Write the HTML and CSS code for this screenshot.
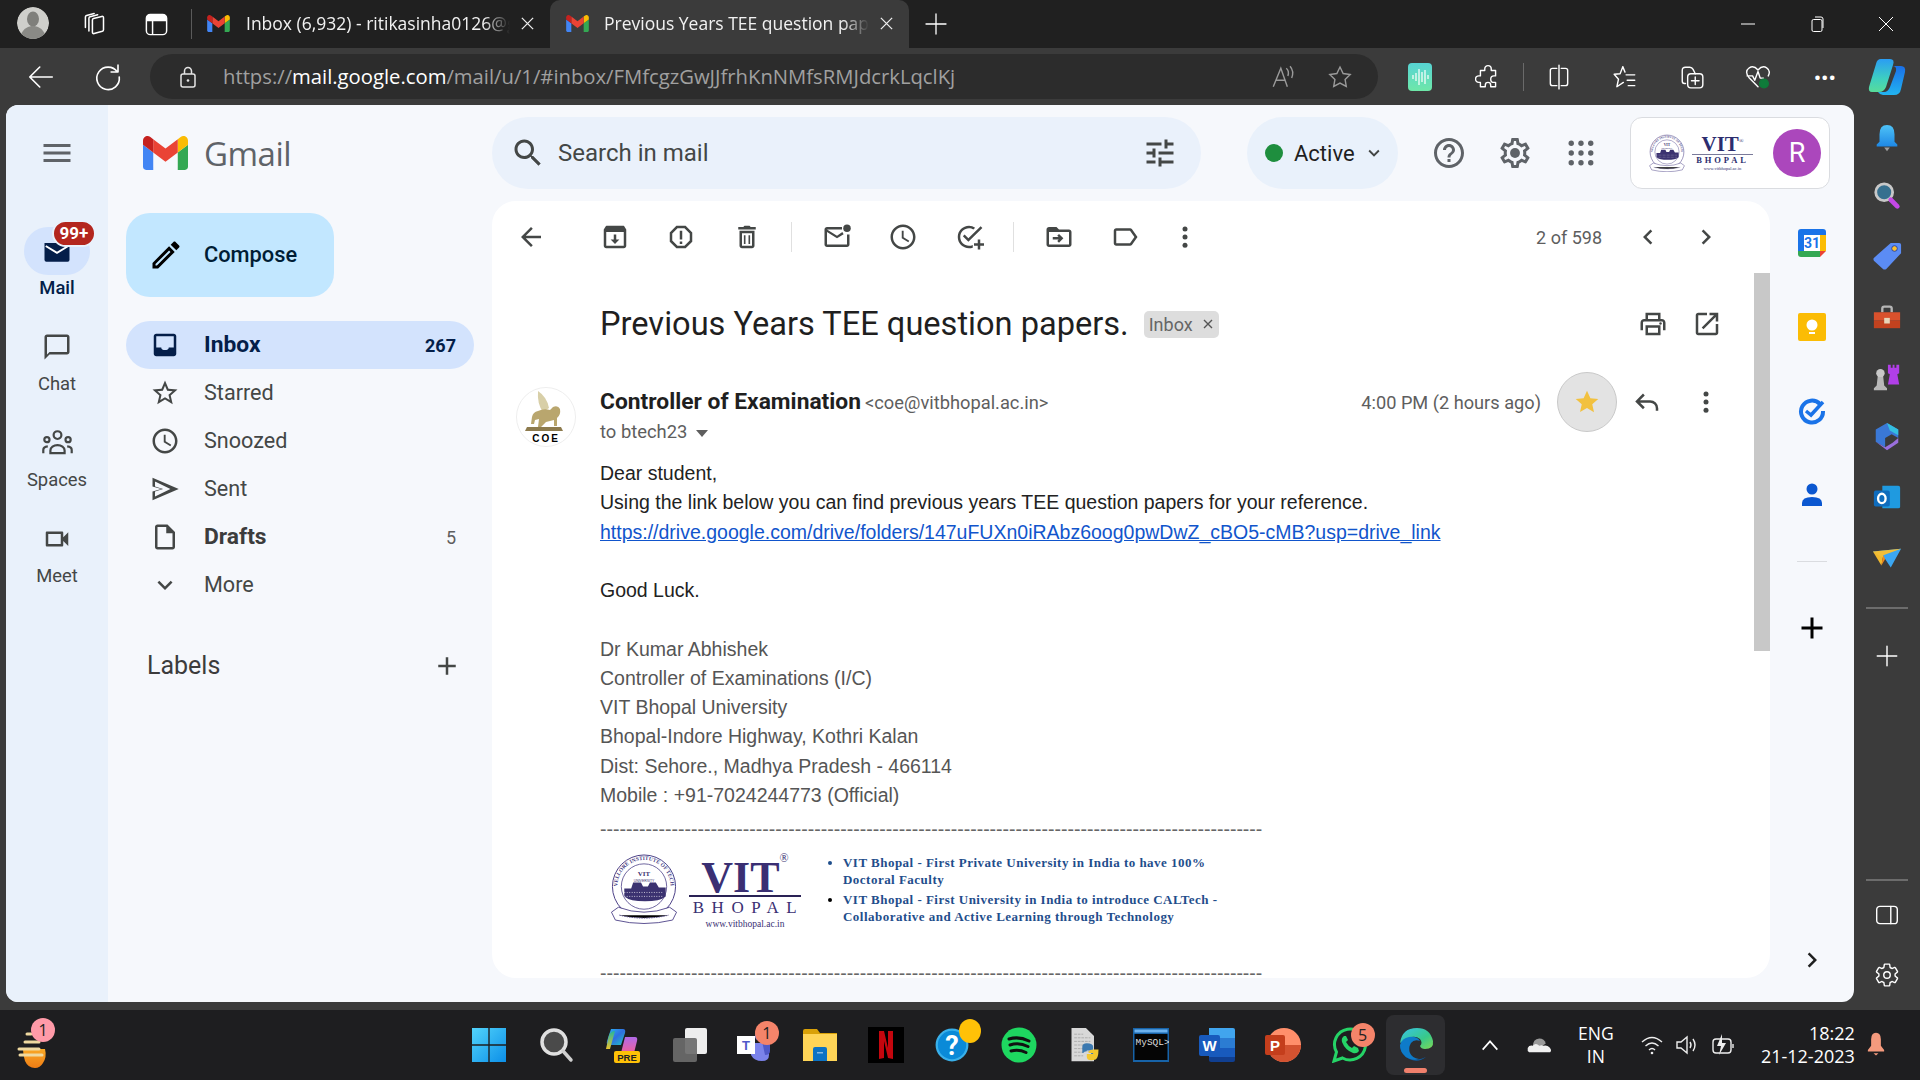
FILE: index.html
```html
<!DOCTYPE html>
<html lang="en">
<head>
<meta charset="utf-8">
<title>Previous Years TEE question papers.</title>
<link rel="stylesheet" href="styles.css">
</head>
<body>
<svg class="defs" width="0" height="0" aria-hidden="true">
  <defs>
    <linearGradient id="gWin" x1="0" y1="0" x2="1" y2="1"><stop offset="0" stop-color="#52d4fb"/><stop offset="1" stop-color="#0c8fe8"/></linearGradient>
    <linearGradient id="gCop" x1="0" y1="0" x2="1" y2="1"><stop offset="0" stop-color="#2bb6f3"/><stop offset=".5" stop-color="#2f6fe0"/><stop offset="1" stop-color="#1fc7c0"/></linearGradient>
    <linearGradient id="gCopR" x1="0" y1="0" x2="0" y2="1"><stop offset="0" stop-color="#1a6fe8"/><stop offset="1" stop-color="#22b4f0"/></linearGradient>
    <linearGradient id="gCopL" x1="0" y1="0" x2="0" y2="1"><stop offset="0" stop-color="#2a9df4"/><stop offset=".6" stop-color="#3ecfc0"/><stop offset="1" stop-color="#58dc9a"/></linearGradient>
    <linearGradient id="gPre" x1="0" y1="0" x2="0" y2="1"><stop offset="0" stop-color="#b06ae8"/><stop offset="1" stop-color="#f0609a"/></linearGradient>
    <linearGradient id="gPreL" x1="0" y1="0" x2="0" y2="1"><stop offset="0" stop-color="#25b59b"/><stop offset="1" stop-color="#e8c330"/></linearGradient>
    <linearGradient id="gEdge" x1="0" y1="0" x2="1" y2="1"><stop offset="0" stop-color="#38c3e8"/><stop offset=".6" stop-color="#38c98a"/><stop offset="1" stop-color="#7ed957"/></linearGradient>
    <linearGradient id="gSun" x1="0" y1="0" x2="0" y2="1"><stop offset="0" stop-color="#f9a825"/><stop offset="1" stop-color="#ef7d15"/></linearGradient>
    <linearGradient id="gBell" x1="0" y1="0" x2="0" y2="1"><stop offset="0" stop-color="#4fc3f7"/><stop offset="1" stop-color="#1e88e5"/></linearGradient>
    <linearGradient id="gWave" x1="0" y1="0" x2="0" y2="1"><stop offset="0" stop-color="#57d4d4"/><stop offset="1" stop-color="#6ee7a8"/></linearGradient>
    <symbol id="gm" viewBox="52 42 88 66">
      <path fill="#4285F4" d="M58 108h14V74L52 59v43c0 3.32 2.69 6 6 6"/>
      <path fill="#34A853" d="M120 108h14c3.32 0 6-2.69 6-6V59l-20 15"/>
      <path fill="#FBBC04" d="M120 48v26l20-15v-8c0-7.42-8.47-11.65-14.4-7.2"/>
      <path fill="#EA4335" d="M72 74V48l24 18 24-18v26L96 92"/>
      <path fill="#C5221F" d="M52 51v8l20 15V48l-5.6-4.2c-5.94-4.45-14.4-.22-14.4 7.2"/>
    </symbol>
    <symbol id="more" viewBox="0 0 24 24"><circle cx="12" cy="5.5" r="2"/><circle cx="12" cy="12" r="2"/><circle cx="12" cy="18.5" r="2"/></symbol>
    <symbol id="seal" viewBox="0 0 68 72">
      <path id="sealArc" d="M7 34a27 27 0 0 1 54 0" fill="none"/>
      <circle cx="34" cy="34" r="32" fill="#fff" stroke="#4a3f86" stroke-width="1"/>
      <circle cx="34" cy="34" r="23" fill="#fff" stroke="#4a3f86" stroke-width=".8"/>
      <text class="seal-ring"><textPath href="#sealArc">VELLORE INSTITUTE OF TECHNOLOGY</textPath></text>
      <text class="seal-v" x="34" y="23" text-anchor="middle">VIT</text>
      <text class="seal-u" x="34" y="29" text-anchor="middle">UNIVERSITY</text>
      <path fill="#3b3270" d="M14 44V36h7l2-6h8l2 4h5l2-4h6l3 5h7v9q-6 5-21 5t-21-5z"/>
      <path fill="none" stroke="#fff" stroke-width=".7" stroke-dasharray="1 1.5" d="M14 40h40M14 44h40"/>
      <path fill="#fff" stroke="#4a3f86" stroke-width=".9" d="M1 60l7-5q26 10 52 0l7 5-4 8q-29 7-58 0z"/>
      <path stroke="#4a3f86" stroke-width="1" stroke-dasharray="1.5 1" d="M9 63q25 6 50 0"/>
    </symbol>
  </defs>
</svg>

<div class="screen">
  <header class="titlebar">
    <div class="profile-pic"><svg viewBox="0 0 32 32"><circle cx="16" cy="16" r="16" fill="#cfcfcb"/><ellipse cx="16" cy="12" rx="6" ry="7.5" fill="#7f7f7b"/><path d="M4 28c2-7 8-9 12-9s10 2 12 9q-5 4-12 4T4 28z" fill="#8a8a86"/></svg></div>
    <div class="tb-btn tb-first"><svg class="i-chrome i-coll" viewBox="0 0 24 24"><path d="M11.500 8.500Q11.500 7.500 12.500 7.200L19.500 5.500Q21 5.200 21 6.700V17Q21 18 20 18.300L13 20.200Q11.500 20.500 11.500 19Z"/><path d="M8.500 18V7Q8.500 6 9.500 5.700L16 4"/><path d="M5.500 15V6Q5.500 5 6.500 4.700L13 3"/></svg></div>
    <div class="tb-btn tb-second"><svg class="i-chrome i-vtabs" viewBox="0 0 24 24"><rect x="3" y="3" width="18" height="18" rx="3.500"/><path class="solid" d="M3.500 7Q3.500 3.500 7 3.500h10Q20.500 3.500 20.500 7v1.500h-17z"/><path d="M8.500 8.500V20.500"/></svg></div>
    <div class="tab-sep"></div>
    <div class="tab">
      <svg class="favicon"><use href="#gm"/></svg>
      <span class="tab-title">Inbox (6,932) - ritikasinha0126@gmail.com</span>
      <svg class="tab-x" viewBox="0 0 16 16"><path d="M2 2l12 12M14 2L2 14"/></svg>
    </div>
    <div class="tab tab-active">
      <svg class="favicon"><use href="#gm"/></svg>
      <span class="tab-title">Previous Years TEE question papers.</span>
      <svg class="tab-x" viewBox="0 0 16 16"><path d="M2 2l12 12M14 2L2 14"/></svg>
    </div>
    <div class="tb-btn"><svg class="i-chrome" viewBox="0 0 24 24"><path d="M12 2v20M2 12h20"/></svg></div>
    <div class="win-btns">
      <div class="win-btn"><svg viewBox="0 0 16 16"><path d="M1 8h14"/></svg></div>
      <div class="win-btn"><svg viewBox="0 0 16 16"><rect x="3" y="3.5" width="10" height="12" rx="1.5"/><path d="M6 1h6q2 0 2 2v9"/></svg></div>
      <div class="win-btn"><svg viewBox="0 0 16 16"><path d="M1 1l14 14M15 1L1 15"/></svg></div>
    </div>
  </header>

  <div class="toolbar">
    <div class="tool-back"><svg class="i-chrome i-lg" viewBox="0 0 24 24"><path d="M21 12H3M11 4l-8 8 8 8"/></svg></div>
    <div class="tool-reload"><svg class="i-chrome i-lg" viewBox="0 0 24 24"><path d="M19.5 8A9 9 0 1 0 21 12M20 2.5V8h-5.5"/></svg></div>
    <div class="address">
      <svg class="i-lock" viewBox="0 0 24 24"><rect x="5" y="9" width="14" height="13" rx="2"/><path d="M8.5 9V6a3.500 3.500 0 0 1 7 0v3"/><circle class="solid" cx="12" cy="15.500" r="1.300"/></svg>
      <span class="url"><span class="url-dim">https://</span><span class="url-host">mail.google.com</span><span class="url-dim">/mail/u/1/#inbox/FMfcgzGwJJfrhKnNMfsRMJdcrkLqclKj</span></span>
      <svg class="i-addr i-read" viewBox="0 0 24 24"><path d="M3 21L10 4l6 17M5.500 15h9M15 4q3 2.500 1.500 7M18.500 2q4 4.500 1.500 11"/></svg>
      <svg class="i-addr i-fav" viewBox="0 0 24 24"><path d="M12 2.800l2.900 6 6.500.9-4.700 4.500 1.100 6.500-5.800-3.100-5.800 3.100 1.100-6.500-4.700-4.500 6.500-.9z"/></svg>
    </div>
    <div class="ext ext-wave"><svg viewBox="0 0 24 28"><rect width="24" height="28" rx="4" fill="url(#gWave)"/><path d="M5 12v4M8 10v8M11 6v16M14 9v10M17 7v14M20 12v4" stroke="#fff" stroke-width="1.200"/></svg></div>
    <div class="ext ext-puzzle"><svg class="i-chrome i-md" viewBox="0 0 24 24"><path d="M9 4.500a3 3 0 0 1 6 0V6h4v5h-1.500a3 3 0 0 0 0 6H19v4h-4.500v-1.500a2.500 2.500 0 0 0-5 0V21H5v-4H3.500a3 3 0 0 1 0-6H5V6h4z"/></svg></div>
    <div class="tool-sep"></div>
    <div class="ext"><svg class="i-chrome i-md" viewBox="0 0 24 24"><path d="M10 4H6q-2 0-2 2v12q0 2 2 2h4M14 4h4q2 0 2 2v12q0 2-2 2h-4M12 1v22"/></svg></div>
    <div class="ext"><svg class="i-chrome i-md" viewBox="0 0 24 24"><path d="M13 10h8M14 15h7M15 20h6M10 2.500L7.500 9 2 9.500l4 4.500-1.500 7 6-4M10 2.500l2 5"/></svg></div>
    <div class="ext"><svg class="i-chrome i-md" viewBox="0 0 24 24"><path d="M6 18H5q-2 0-2-2V6q0-3 3-3h4q2 0 3 2l2 4"/><rect x="8" y="9" width="14" height="13" rx="3"/><path d="M15 12v7M11.500 15.500h7"/></svg></div>
    <div class="ext ext-health"><svg class="i-chrome i-md" viewBox="0 0 24 24"><path d="M12 21L4 13q-5-6 0-9.500 4-2.500 8 2 4-4.500 8-2 4 2.500 1.500 7.500M2 11h5l2 4 3-8 2 6h3"/><circle class="green" cx="17.500" cy="18" r="4"/></svg></div>
    <div class="ext ext-dots">···</div>
    <div class="ext ext-cop"><svg viewBox="0 0 38 38"><path fill="url(#gCopL)" d="M13 1h9q5 0 3 6l-7 22q-2 5-7 5H4Q0 34 1 29L8 6q1-5 5-5z"/><path fill="url(#gCopR)" d="M24 8h9q5 0 4 6l-4 17q-1 6-7 6H15q-3 0-5-3h6q4 0 6-5l6-16q1-5-4-5z"/></svg></div>
  </div>

  <div class="app">
    <main class="gmail">
      <nav class="rail">
        <div class="rail-menu"><svg class="ic ic-m" viewBox="0 0 24 24"><path d="M3 18h18v-2H3v2zm0-5h18v-2H3v2zm0-7v2h18V6H3z"/></svg></div>
        <div class="rail-item rail-active">
          <div class="rail-pill">
            <svg class="ic ic-navy" viewBox="0 0 24 24"><path d="M2 5.500h20V19q0 1.500-1.500 1.500h-17Q2 20.500 2 19z"/><path class="env-v" d="M3 8l9 5.500L21 8"/></svg>
            <span class="badge">99+</span>
          </div>
          <span class="rail-label">Mail</span>
        </div>
        <div class="rail-item">
          <div class="rail-pill"><svg class="ic ic-g" viewBox="0 0 24 24"><path d="M20 2H4c-1.100 0-2 .9-2 2v18l4-4h14c1.100 0 2-.9 2-2V4c0-1.100-.9-2-2-2zm0 14H6l-2 2V4h16v12z"/></svg></div>
          <span class="rail-label">Chat</span>
        </div>
        <div class="rail-item">
          <div class="rail-pill"><svg class="ic ic-spaces" viewBox="0 0 24 24"><circle cx="12" cy="5.500" r="3"/><circle cx="3.800" cy="9" r="2"/><circle cx="20.200" cy="9" r="2"/><path d="M6.500 19.500v-2c0-2.500 2.500-4.200 5.500-4.200s5.500 1.700 5.500 4.200v2z"/><path d="M1 19.500v-2.500q0-2.500 3.500-2.800M23 19.500v-2.500q0-2.500-3.500-2.800"/></svg></div>
          <span class="rail-label">Spaces</span>
        </div>
        <div class="rail-item">
          <div class="rail-pill"><svg class="ic ic-g" viewBox="0 0 24 24"><path d="M15 8v8H5V8h10m1-2H4c-.55 0-1 .45-1 1v10c0 .55.45 1 1 1h12c.55 0 1-.45 1-1v-3.500l4 4v-11l-4 4V7c0-.55-.45-1-1-1z"/></svg></div>
          <span class="rail-label">Meet</span>
        </div>
      </nav>

      <div class="brand">
        <svg class="brand-m"><use href="#gm"/></svg>
        <span class="brand-name">Gmail</span>
      </div>

      <aside class="sidenav">
        <button class="compose" type="button">
          <svg class="ic-36" viewBox="0 0 24 24"><path d="M3 17.250V21h3.750L17.810 9.940l-3.750-3.750L3 17.250zM5.920 19H5v-.92l9.060-9.060.92.92L5.920 19zM20.710 7.040c.39-.39.39-1.020 0-1.410l-2.340-2.340c-.2-.2-.45-.29-.71-.29s-.51.1-.7.29l-1.830 1.830 3.750 3.750 1.830-1.830z"/></svg>
          <span class="compose-text">Compose</span>
        </button>
        <ul class="nav-list">
          <li class="nav-row nav-active">
            <svg class="ic ic-navy" viewBox="0 0 24 24"><path d="M19 3H5c-1.100 0-2 .9-2 2v14c0 1.100.9 2 2 2h14c1.100 0 2-.9 2-2V5c0-1.100-.9-2-2-2zm0 11h-4c0 1.660-1.340 2-3 2s-3-.34-3-2H5V5h14v9z"/></svg>
            <span class="nav-text">Inbox</span><span class="nav-count">267</span>
          </li>
          <li class="nav-row">
            <svg class="ic ic-d" viewBox="0 0 24 24"><path d="M22 9.240l-7.190-.62L12 2 9.190 8.630 2 9.240l5.460 4.730L5.820 21 12 17.270 18.180 21l-1.630-7.030L22 9.240zM12 15.400l-3.760 2.270 1-4.280-3.320-2.880 4.380-.38L12 6.100l1.710 4.040 4.380.38-3.320 2.880 1 4.280L12 15.400z"/></svg>
            <span class="nav-text">Starred</span>
          </li>
          <li class="nav-row">
            <svg class="ic ic-d" viewBox="0 0 24 24"><path d="M11.990 2C6.470 2 2 6.480 2 12s4.470 10 9.990 10C17.520 22 22 17.520 22 12S17.520 2 11.990 2zM12 20c-4.420 0-8-3.580-8-8s3.580-8 8-8 8 3.580 8 8-3.580 8-8 8zm.5-13H11v6l5.250 3.150.75-1.230-4.500-2.670z"/></svg>
            <span class="nav-text">Snoozed</span>
          </li>
          <li class="nav-row">
            <svg class="ic ic-d" viewBox="0 0 24 24"><path d="M4.010 6.030l12.300 5.970-12.310 5.970.01-3.970 6.500-2-6.500-2 .01-3.970M2.010 3L2 10l7 2-7 2 .01 7L23 12 2.010 3z"/></svg>
            <span class="nav-text">Sent</span>
          </li>
          <li class="nav-row nav-bold">
            <svg class="ic ic-d" viewBox="0 0 24 24"><path d="M14 2H6c-1.100 0-1.990.9-1.990 2L4 20c0 1.100.89 2 1.990 2H18c1.100 0 2-.9 2-2V8l-6-6zM6 20V4h7v5h5v11H6z"/></svg>
            <span class="nav-text">Drafts</span><span class="nav-count nav-count-light">5</span>
          </li>
          <li class="nav-row">
            <svg class="ic ic-d" viewBox="0 0 24 24"><path d="M16.590 8.590L12 13.170 7.410 8.590 6 10l6 6 6-6z"/></svg>
            <span class="nav-text">More</span>
          </li>
        </ul>
        <div class="labels">
          <span class="labels-text">Labels</span>
          <svg class="ic ic-g" viewBox="0 0 24 24"><path d="M19 13h-6v6h-2v-6H5v-2h6V5h2v6h6v2z"/></svg>
        </div>
      </aside>

      <div class="topbar">
        <div class="search">
          <svg class="ic-36 ic-d" viewBox="0 0 24 24"><path d="M15.500 14h-.79l-.28-.27C15.410 12.590 16 11.110 16 9.500 16 5.910 13.090 3 9.500 3S3 5.910 3 9.500 5.910 16 9.500 16c1.610 0 3.090-.59 4.230-1.570l.27.28v.79l5 4.990L20.490 19l-4.990-5zm-6 0C7.010 14 5 11.990 5 9.500S7.010 5 9.500 5 14 7.010 14 9.500 11.990 14 9.500 14z"/></svg>
          <span class="search-text">Search in mail</span>
          <svg class="ic-36 ic-d search-tune" viewBox="0 0 24 24"><path d="M3 17v2h6v-2H3zM3 5v2h10V5H3zm10 16v-2h8v-2h-8v-2h-2v6h2zM7 9v2H3v2h4v2h2V9H7zm14 4v-2H11v2h10zm-6-4h2V7h4V5h-4V3h-2v6z"/></svg>
        </div>
        <div class="status">
          <span class="status-dot"></span>
          <span class="status-text">Active</span>
          <svg class="status-arrow" viewBox="0 0 24 24"><path d="M16.590 8.590L12 13.170 7.410 8.590 6 10l6 6 6-6z"/></svg>
        </div>
        <div class="top-btns">
          <div class="top-btn"><svg class="ic-36 ic-m" viewBox="0 0 24 24"><path d="M11 18h2v-2h-2v2zm1-16C6.480 2 2 6.480 2 12s4.480 10 10 10 10-4.480 10-10S17.520 2 12 2zm0 18c-4.410 0-8-3.590-8-8s3.590-8 8-8 8 3.590 8 8-3.590 8-8 8zm0-14c-2.210 0-4 1.790-4 4h2c0-1.100.9-2 2-2s2 .9 2 2c0 2-3 1.750-3 5h2c0-2.250 3-2.500 3-5 0-2.210-1.790-4-4-4z"/></svg></div>
          <div class="top-btn"><svg class="ic-36 ic-m" viewBox="0 0 24 24"><path d="M19.430 12.980c.04-.32.07-.64.07-.98 0-.34-.03-.66-.07-.98l2.110-1.650c.19-.15.24-.42.12-.64l-2-3.460c-.09-.16-.26-.25-.44-.25-.06 0-.12.01-.17.03l-2.490 1c-.52-.4-1.080-.73-1.690-.98l-.38-2.650C14.460 2.180 14.250 2 14 2h-4c-.25 0-.46.18-.49.42l-.38 2.650c-.61.25-1.170.59-1.690.98l-2.490-1c-.06-.02-.12-.03-.18-.03-.17 0-.34.09-.43.25l-2 3.460c-.13.22-.07.49.12.64l2.110 1.650c-.04.32-.07.65-.07.98 0 .33.03.66.07.98l-2.110 1.650c-.19.15-.24.42-.12.64l2 3.460c.09.16.26.25.44.25.06 0 .12-.01.17-.03l2.490-1c.52.4 1.080.73 1.690.98l.38 2.650c.03.24.24.42.49.42h4c.25 0 .46-.18.49-.42l.38-2.650c.61-.25 1.170-.59 1.690-.98l2.490 1c.06.02.12.03.18.03.17 0 .34-.09.43-.25l2-3.460c.12-.22.07-.49-.12-.64l-2.110-1.650zm-1.980-1.710c.04.31.05.52.05.73 0 .21-.02.43-.05.73l-.14 1.130.89.7 1.080.84-.7 1.210-1.270-.51-1.040-.42-.9.68c-.43.32-.84.56-1.250.73l-1.060.43-.16 1.130-.2 1.350h-1.400l-.19-1.350-.16-1.130-1.060-.43c-.43-.18-.83-.41-1.230-.71l-.91-.7-1.060.43-1.270.51-.7-1.210 1.080-.84.89-.7-.14-1.130c-.03-.31-.05-.54-.05-.74s.02-.43.05-.73l.14-1.130-.89-.7-1.080-.84.7-1.210 1.270.51 1.040.42.9-.68c.43-.32.84-.56 1.250-.73l1.060-.43.16-1.130.2-1.350h1.390l.19 1.350.16 1.130 1.060.43c.43.18.83.41 1.230.71l.91.7 1.060-.43 1.270-.51.7 1.210-1.070.85-.89.7.14 1.130z"/><circle cx="12" cy="12" r="3.300"/></svg></div>
          <div class="top-btn"><svg class="ic-36 ic-m" viewBox="0 0 24 24"><circle cx="5.500" cy="5.500" r="1.800"/><circle cx="12" cy="5.500" r="1.800"/><circle cx="18.500" cy="5.500" r="1.800"/><circle cx="5.500" cy="12" r="1.800"/><circle cx="12" cy="12" r="1.800"/><circle cx="18.500" cy="12" r="1.800"/><circle cx="5.500" cy="18.500" r="1.800"/><circle cx="12" cy="18.500" r="1.800"/><circle cx="18.500" cy="18.500" r="1.800"/></svg></div>
        </div>
        <div class="account">
          <svg class="account-seal"><use href="#seal"/></svg>
          <div class="account-vit">
            <span class="account-name">VIT<sup>®</sup></span>
            <span class="account-place">BHOPAL</span>
            <span class="account-web">www.vitbhopal.ac.in</span>
          </div>
          <span class="avatar-r">R</span>
        </div>
      </div>

      <section class="card">
        <div class="actions">
          <div class="act act-back"><svg class="ic ic-g" viewBox="0 0 24 24"><path d="M20 11H7.830l5.590-5.590L12 4l-8 8 8 8 1.410-1.410L7.830 13H20v-2z"/></svg></div>
          <div class="act act-first"><svg class="ic ic-g" viewBox="0 0 24 24"><path d="M19.500 3.500L21 6v13c0 1.100-.9 2-2 2H5c-1.100 0-2-.9-2-2V6l1.500-2.500C5 3 5.300 3 6 3h12c.7 0 1.200 0 1.500.5zM5 8v11h14V8H5zm6 2h2v4h2.500L12 17.500 8.500 14H11v-4z"/></svg></div>
          <div class="act"><svg class="ic ic-g" viewBox="0 0 24 24"><path d="M8.300 3h7.400L21 8.300v7.400L15.700 21H8.300L3 15.700V8.300L8.300 3zm.9 2L5 9.200v5.600L9.200 19h5.600l4.200-4.200V9.200L14.800 5H9.200zM11 7h2v7h-2V7zm0 8.500h2v2h-2v-2z"/></svg></div>
          <div class="act"><svg class="ic ic-g" viewBox="0 0 24 24"><path d="M15 4l-1-1h-4L9 4H5v2h14V4zM6 7v12c0 1.100.9 2 2 2h8c1.100 0 2-.9 2-2V7H6zm2 2h8v10H8V9zm1.500 1.500h1.300v7H9.500v-7zm3.700 0h1.300v7h-1.300v-7z"/></svg></div>
          <div class="act-sep"></div>
          <div class="act"><svg class="ic ic-g" viewBox="0 0 24 24"><path d="M16 4H4c-1.100 0-2 .9-2 2v12c0 1.100.9 2 2 2h16c1.100 0 2-.9 2-2v-8h-2v8H4V8l8 5 5.300-3.300-1-1.700L12 11 4 6h12V4z"/><circle cx="20" cy="5" r="3"/></svg></div>
          <div class="act"><svg class="ic ic-g" viewBox="0 0 24 24"><path d="M11.990 2C6.470 2 2 6.480 2 12s4.470 10 9.990 10C17.520 22 22 17.520 22 12S17.520 2 11.990 2zM12 20c-4.420 0-8-3.580-8-8s3.580-8 8-8 8 3.580 8 8-3.580 8-8 8zm.5-13H11v6l5.250 3.150.75-1.230-4.500-2.670z"/></svg></div>
          <div class="act"><svg class="ic ic-g" viewBox="0 0 24 24"><path d="M12 3c-5 0-9 4-9 9s4 9 9 9c1.100 0 2.100-.2 3-.5v-2.200c-.9.400-1.900.7-3 .7-3.900 0-7-3.100-7-7s3.100-7 7-7c1.300 0 2.500.3 3.500 1l1.400-1.400C15.500 3.600 13.800 3 12 3zm9.300.3L11.500 13l-3-3-1.400 1.400 4.400 4.400L22.700 4.700l-1.400-1.400zM19 14v3h-3v2h3v3h2v-3h3v-2h-3v-3h-2z"/></svg></div>
          <div class="act-sep"></div>
          <div class="act"><svg class="ic ic-g" viewBox="0 0 24 24"><path d="M20 6h-8l-2-2H4c-1.100 0-2 .9-2 2v12c0 1.100.9 2 2 2h16c1.100 0 2-.9 2-2V8c0-1.100-.9-2-2-2zm0 12H4V8h16v10zM12 9.500l-1.400 1.400 1.100 1.100H7v2h4.700l-1.100 1.100L12 16.500l3.500-3.500L12 9.500z"/></svg></div>
          <div class="act"><svg class="ic ic-g" viewBox="0 0 24 24"><path d="M17.630 5.840C17.270 5.330 16.670 5 16 5L5 5.010C3.900 5.010 3 5.900 3 7v10c0 1.100.9 1.990 2 1.990L16 19c.67 0 1.270-.33 1.630-.84L22 12l-4.370-6.160zM16 17H5V7h11l3.550 5L16 17z"/></svg></div>
          <div class="act act-more"><svg class="ic ic-g"><use href="#more"/></svg></div>
          <div class="pager">
            <span class="pager-text">2 of 598</span>
            <div class="pager-btn"><svg class="ic ic-g" viewBox="0 0 24 24"><path d="M15.410 7.410L14 6l-6 6 6 6 1.410-1.410L10.830 12z"/></svg></div>
            <div class="pager-btn"><svg class="ic ic-g" viewBox="0 0 24 24"><path d="M8.590 16.590L10 18l6-6-6-6-1.410 1.410L13.170 12z"/></svg></div>
          </div>
        </div>

        <div class="card-body">
          <article class="thread">
            <div class="subject-row">
              <h1 class="subject">Previous Years TEE question papers.</h1>
              <span class="chip">Inbox<svg class="chip-x" viewBox="0 0 12 12"><path d="M2 2l8 8M10 2l-8 8"/></svg></span>
              <div class="subject-tools">
                <svg class="ic ic-g" viewBox="0 0 24 24"><path d="M19 8h-1V3H6v5H5c-1.660 0-3 1.340-3 3v6h4v4h12v-4h4v-6c0-1.660-1.340-3-3-3zM8 5h8v3H8V5zm8 14H8v-4h8v4zm2-2v-4H6v4H4v-6c0-.55.45-1 1-1h14c.55 0 1 .45 1 1v6h-2z"/><circle cx="18" cy="11.500" r="1"/></svg>
                <svg class="ic ic-g" viewBox="0 0 24 24"><path d="M19 19H5V5h7V3H5c-1.110 0-2 .9-2 2v14c0 1.100.89 2 2 2h14c1.100 0 2-.9 2-2v-7h-2v7zM14 3v2h3.590l-9.830 9.830 1.410 1.410L19 6.410V10h2V3h-7z"/></svg>
              </div>
            </div>
            <div class="message">
              <div class="sender-pic"><svg viewBox="0 0 60 60"><circle cx="30" cy="30" r="29.500" fill="#fff" stroke="#eee"/><path fill="#d8cfa8" d="M22 4q9 6 11 17l-6 4q-6-8-5-21z"/><path fill="#b9a66e" d="M22 24q6-3 12-1l3-3q5-2 7 2 1 6-3 9v8h-3v-6l-8 2-5 5h-3l1-8-4 1-1 4h-3l1-7q1-5 6-6z"/><path fill="#8d7b4e" d="M11 40h34l2 4H9z"/><text class="coe" x="30" y="55" text-anchor="middle">COE</text></svg></div>
              <div class="msg-main">
                <div class="msg-head">
                  <div class="who">
                    <div class="who-from"><span class="from-name">Controller of Examination</span> <span class="from-mail">&lt;coe@vitbhopal.ac.in&gt;</span></div>
                    <div class="who-to">to btech23 <span class="to-arrow"></span></div>
                  </div>
                  <div class="msg-meta">
                    <span class="msg-time">4:00 PM (2 hours ago)</span>
                    <div class="star-btn"><svg viewBox="0 0 24 24"><path fill="#f2c13f" d="M12 3l2.700 6 6.300.6-4.800 4.200 1.400 6.300L12 16.800 6.400 20l1.400-6.300L3 9.600 9.300 9z"/></svg></div>
                    <div class="meta-btn"><svg class="ic ic-reply" viewBox="0 0 24 24"><path d="M9.500 6L4 11.500l5.500 5.500M4 11.500h10.500c3 0 5.500 2.300 5.500 5.500v2"/></svg></div>
                    <div class="meta-btn"><svg class="ic ic-g"><use href="#more"/></svg></div>
                  </div>
                </div>
                <div class="msg-body">
                  <div>Dear student,</div>
                  <div>Using the link below you can find previous years TEE question papers for your reference.</div>
                  <div><a class="link" href="#">https://drive.google.com/drive/folders/147uFUXn0iRAbz6oog0pwDwZ_cBO5-cMB?usp=drive_link</a></div>
                  <div><br></div>
                  <div>Good Luck.</div>
                  <div><br></div>
                  <div class="sig">
                    <div>Dr Kumar Abhishek</div>
                    <div>Controller of Examinations (I/C)</div>
                    <div>VIT Bhopal University</div>
                    <div>Bhopal-Indore Highway, Kothri Kalan</div>
                    <div>Dist: Sehore., Madhya Pradesh - 466114</div>
                    <div>Mobile : +91-7024244773 (Official)</div>
                    <div class="dashes dashes-top">------------------------------------------------------------------------------------------------------</div>
                    <div class="banner">
                      <svg class="banner-seal"><use href="#seal"/></svg>
                      <div class="banner-vit">
                        <span class="banner-name">VIT<sup>®</sup></span>
                        <span class="banner-place">BHOPAL</span>
                        <span class="banner-web">www.vitbhopal.ac.in</span>
                      </div>
                      <ul class="banner-list">
                        <li>VIT Bhopal - First Private University in India to have 100% Doctoral Faculty</li>
                        <li>VIT Bhopal - First University in India to introduce CALTech - Collaborative and Active Learning through Technology</li>
                      </ul>
                    </div>
                    <div class="dashes">------------------------------------------------------------------------------------------------------</div>
                  </div>
                </div>
              </div>
            </div>
          </article>
          <div class="scroll-track"><div class="scroll-thumb"></div></div>
        </div>
      </section>

      <aside class="addons">
        <div class="addon"><svg class="ic-28" viewBox="0 0 28 28"><path fill="#fff" d="M6 6h16v16H6z"/><path fill="#1a73e8" d="M3 0h22a3 3 0 0 1 3 3v3H6v16H0V3a3 3 0 0 1 3-3z"/><path fill="#fbbc04" d="M22 6h6v16h-6z"/><path fill="#34a853" d="M0 22h22v6H3a3 3 0 0 1-3-3z"/><path fill="#ea4335" d="M22 22h6l-6 6z"/><text class="cal" x="14" y="19" text-anchor="middle">31</text></svg></div>
        <div class="addon"><svg class="ic-28" viewBox="0 0 28 28"><rect width="28" height="28" rx="2" fill="#fbbc04"/><circle cx="14" cy="12" r="5.500" fill="#fff"/><rect x="11" y="19" width="6" height="2" fill="#fff"/></svg></div>
        <div class="addon"><svg class="ic-28" viewBox="0 0 28 28"><path fill="none" stroke="#1a73e8" stroke-width="4" d="M22 7a11 11 0 1 0 3 7"/><path fill="none" stroke="#1a73e8" stroke-width="3.500" d="M8 14l5 4L25 5"/></svg></div>
        <div class="addon"><svg class="ic-28" viewBox="0 0 28 28"><circle cx="14" cy="8" r="5.500" fill="#0b57d0"/><path fill="#0b57d0" d="M4 25v-3q0-6 10-6t10 6v3z"/></svg></div>
        <div class="addon-sep"></div>
        <div class="addon-plus"><svg class="ic-36" viewBox="0 0 24 24"><path d="M19 13h-6v6h-2v-6H5v-2h6V5h2v6h6v2z"/></svg></div>
        <div class="addon-chev"><svg class="ic" viewBox="0 0 24 24"><path d="M8.590 16.590L10 18l6-6-6-6-1.410 1.410L13.170 12z"/></svg></div>
      </aside>
    </main>

    <aside class="edge-side">
      <div class="side-i side-bell"><svg viewBox="0 0 32 32"><path fill="url(#gBell)" d="M16 2q8 0 8 10v8l3 3v2H5v-2l3-3v-8q0-10 8-10z"/><path fill="#9e9e9e" d="M13 26h6l-3 4z"/></svg></div>
      <div class="side-i"><svg viewBox="0 0 32 32"><circle cx="13" cy="12" r="9" fill="#37708f" stroke="#c8c8c8" stroke-width="3"/><path stroke="#c448e6" stroke-width="5" stroke-linecap="round" d="M20 20l7 7"/></svg></div>
      <div class="side-i"><svg viewBox="0 0 32 32"><path fill="#5b8cf5" d="M20 2h9q2 0 2 2v9L15 30q-2 1-3 0L2 21q-1-2 0-3z"/><circle cx="24" cy="8" r="3" fill="#fbc02d" stroke="#1d3fb0" stroke-width="1"/></svg></div>
      <div class="side-i"><svg viewBox="0 -3 32 32"><path fill="none" stroke="#b5b5b5" stroke-width="2.500" d="M11 9V5q0-2 2-2h6q2 0 2 2v4"/><path fill="#d9512c" d="M2 9h28v9H2z"/><path fill="#c2421f" d="M2 18h28v8H2z"/><rect x="13" y="15" width="6" height="6" fill="#e8d5b8"/></svg></div>
      <div class="side-i"><svg viewBox="0 0 32 32"><circle cx="9" cy="12" r="4.500" fill="#c8c8c8"/><path fill="#b8b8b8" d="M6 16h6l1 9 3 3v2H2v-2l3-3z"/><path fill="#b13fe8" d="M17 3h3v3h2V3h2v3h2V3h3v9l-2 1 2 11H17l2-11-2-1z"/></svg></div>
      <div class="side-i"><svg viewBox="0 0 32 32"><path fill="#3a78d6" d="M16 1l12 7v9l-7-4-7 4v10L4 21V8z"/><path fill="#9a6fdc" d="M4 21l10 6 8-5 6-5v5l-12 8z"/><path fill="#34bfe0" d="M16 1l12 7v6l-9-5z"/></svg></div>
      <div class="side-i"><svg viewBox="0 0 32 32"><path fill="#1f9ae0" d="M11 3h17q2 0 2 2v20q0 2-2 2H11z"/><rect x="2" y="8" width="17" height="17" rx="2" fill="#0f6cbd"/><ellipse cx="10.500" cy="16.500" rx="4" ry="5" fill="none" stroke="#fff" stroke-width="2.500"/></svg></div>
      <div class="side-i"><svg viewBox="0 -2 32 32"><path fill="#3ba7f2" d="M1 7l30-3-11 20-6-9z"/><path fill="#fbc02d" d="M1 7l30-3-19 7-2 11z" opacity=".95"/><path fill="#f08a1d" d="M12 11l-2 11 4-7z"/></svg></div>
      <div class="side-sep"></div>
      <div class="side-plus"><svg class="i-chrome i-md" viewBox="0 0 24 24"><path d="M12 3v18M3 12h18"/></svg></div>
      <div class="side-sep side-sep-low"></div>
      <div class="side-tool side-panel"><svg class="i-chrome i-md" viewBox="0 0 24 24"><rect x="2.500" y="4" width="19" height="16" rx="3"/><path d="M15.500 4v16"/></svg></div>
      <div class="side-tool side-gear"><svg class="i-chrome i-md" viewBox="0 0 24 24"><path d="M19.430 12.980c.04-.32.07-.64.07-.98 0-.34-.03-.66-.07-.98l2.110-1.650c.19-.15.24-.42.12-.64l-2-3.460c-.12-.22-.39-.3-.61-.22l-2.490 1c-.52-.4-1.080-.73-1.690-.98l-.38-2.650C14.460 2.180 14.250 2 14 2h-4c-.25 0-.46.18-.49.42l-.38 2.650c-.61.25-1.170.59-1.690.98l-2.490-1c-.23-.09-.49 0-.61.22l-2 3.460c-.13.22-.07.49.12.64l2.110 1.650c-.04.32-.07.65-.07.98 0 .33.03.66.07.98l-2.110 1.650c-.19.15-.24.42-.12.64l2 3.460c.12.22.39.3.61.22l2.490-1c.52.4 1.080.73 1.690.98l.38 2.650c.03.24.24.42.49.42h4c.25 0 .46-.18.49-.42l.38-2.650c.61-.25 1.170-.59 1.690-.98l2.490 1c.23.09.49 0 .61-.22l2-3.460c.12-.22.07-.49-.12-.64l-2.110-1.650z"/><circle cx="12" cy="12" r="3"/></svg></div>
    </aside>
  </div>

  <div class="strip"></div>

  <footer class="taskbar">
    <div class="widget">
      <svg viewBox="0 0 36 42"><path fill="url(#gSun)" d="M6 22h22q2 8-2 14-3 5-8 5-7 0-10-7-2-6-2-12z"/><path stroke="#efd9a0" stroke-width="3" stroke-linecap="round" d="M10 7h4M8 15h14M2 22h20M3 28h22"/></svg>
      <span class="tray-badge badge-pink">1</span>
    </div>
    <div class="apps">
      <div class="app-i"><svg viewBox="0 0 36 36"><path fill="url(#gWin)" d="M1 1h16.300v16.300H1zM18.700 1H35v16.300H18.700zM1 18.700h16.300V35H1zM18.700 18.700H35V35H18.700z"/></svg></div>
      <div class="app-i app-nudge"><svg viewBox="0 0 36 36"><circle cx="15" cy="15" r="12" fill="#4a4a4a" stroke="#e0e0e0" stroke-width="3.500"/><path stroke="#cfcfcf" stroke-width="3.500" stroke-linecap="round" d="M24 24l8 9"/></svg></div>
      <div class="app-i app-nudge"><svg viewBox="0 0 36 36"><path fill="url(#gCop)" d="M6 2h12q3 0 2 4l-4 12H4q-3 0-2-4z"/><path fill="url(#gPre)" d="M20 10h10q3 0 2 4l-3 12H16z"/><path fill="url(#gPreL)" d="M4 8q2-4 6-4l-5 18H1z"/><rect x="9" y="24" width="26" height="12" rx="2" fill="#ffc107"/><text class="pre" x="22" y="33.500" text-anchor="middle">PRE</text></svg></div>
      <div class="app-i app-nudge"><svg viewBox="0 0 36 36"><rect x="13" y="1" width="22" height="26" rx="2" fill="#eee"/><rect x="1" y="11" width="24" height="24" rx="2" fill="#6b6b6b" opacity=".92"/></svg></div>
      <div class="app-i app-rel"><svg viewBox="0 0 36 36"><circle cx="24" cy="9" r="5" fill="#7b83eb"/><path fill="#7b83eb" d="M15 16h18v12q0 6-7 6-8 0-11-6z"/><path fill="#5059c9" d="M26 14h8v10q0 4-5 4z"/><rect x="1" y="9" width="18" height="18" fill="#fff"/><text class="teams" x="10" y="23" text-anchor="middle">T</text></svg><span class="tray-badge badge-coral badge-teams">1</span></div>
      <div class="app-i"><svg viewBox="0 0 36 36"><path fill="#d9a108" d="M1 4q0-2 2-2h12l3 4h17v6H1z"/><path fill="#ffd557" d="M1 7h34v27H1z"/><path fill="#0c73c4" d="M11 22q0-2 2-2h10q2 0 2 2v12H11z"/><rect x="15" y="25" width="6" height="1.500" fill="#fff" opacity=".5"/></svg></div>
      <div class="app-i"><svg viewBox="0 0 36 36"><rect width="36" height="36" fill="#000"/><path fill="#c4060e" d="M11 4h5l4 17V4h5v28l-5-1-4-17v17l-5 1z"/></svg></div>
      <div class="app-i app-rel"><svg viewBox="0 0 36 40"><circle cx="18" cy="20" r="17" fill="#0a8ad8" stroke="#39b0ea" stroke-width="2.500"/><text class="help" x="18" y="31" text-anchor="middle">?</text></svg><span class="help-dot"></span></div>
      <div class="app-i"><svg viewBox="0 0 36 36"><circle cx="18" cy="18" r="17.500" fill="#1ed760"/><path fill="none" stroke="#111" stroke-width="3" stroke-linecap="round" d="M8 12q10-3 20 2M9 18q9-3 18 1.500M10 24q8-2 15 1.500"/></svg></div>
      <div class="app-i"><svg viewBox="0 0 36 40"><path fill="#d8d8d8" d="M3 1h16l9 9v28H3z"/><path stroke="#a8a8a8" stroke-dasharray="3 1" d="M6 8h10M6 12h18M6 16h18M6 20h12M6 24h12M6 28h10M6 32h10"/><path fill="#3c79b0" d="M20 18q7 0 7 4v4h-7v1h9v6h-3q-1-6-6-6-3 0-4 2h-1v-7q0-4 5-4z"/><path fill="#f3c730" d="M33 25q0 5-1 8-1 4-7 4-5 0-5-4v-3h7v-1h-5v-2q2-2 5-2z"/></svg></div>
      <div class="app-i"><svg viewBox="0 0 36 36"><rect y="1" width="36" height="34" fill="#1763a8"/><rect x="1.500" y="7" width="33" height="26" fill="#050505"/><path fill="#6cb2ef" d="M1.500 2.500h33v3h-33z"/><text class="mysql" x="2.500" y="18">MySQL&gt;</text></svg></div>
      <div class="app-i"><svg viewBox="0 0 36 36"><path fill="#41a5ee" d="M10 1h24q2 0 2 2v8H10z"/><path fill="#2b7cd3" d="M10 11h26v10H10z"/><path fill="#185abd" d="M10 21h26v9H10z"/><path fill="#103f91" d="M10 30h26v3q0 2-2 2H12q-2 0-2-2z"/><rect y="8" width="21" height="21" rx="2" fill="#185abd"/><text class="word" x="10.500" y="24" text-anchor="middle">W</text></svg></div>
      <div class="app-i"><svg viewBox="0 0 36 36"><circle cx="19" cy="18" r="17" fill="#ff8f6b"/><path fill="#d35230" d="M19 18h17a17 17 0 0 1-34 0z"/><rect y="8" width="20" height="20" rx="2" fill="#c43e1c"/><text class="word" x="10" y="24" text-anchor="middle">P</text></svg></div>
      <div class="app-i app-rel"><svg viewBox="0 0 36 36"><path fill="none" stroke="#25d366" stroke-width="3" d="M2 34l2.500-9a15.500 15.500 0 1 1 6 6z"/><path fill="#25d366" d="M12 9q-3 2-2 6 3 8 11 11 4 1 6-2l-1-3-4-2-2 2q-4-2-6-6l2-2-2-4z"/></svg><span class="tray-badge badge-coral badge-wa">5</span></div>
      <div class="app-i app-on"><svg viewBox="0 0 36 36"><path fill="#0b5ea8" d="M2 18a16 16 0 0 0 26 12q-12 6-17-3-3-6 1-11-5 0-10 2z"/><path fill="url(#gEdge)" d="M2 16Q4 1 19 1q13 0 16 13 1 8-8 8-4 0-5-3 3-3 0-7-5-4-11-1-6 2-9 5z"/><path fill="#0e7bc9" d="M2 18q2-7 9-8 8-1 11 4-6-2-9 2-3 5-1 10 2 5 9 6-7 2-13-2-6-5-6-12z"/></svg><span class="app-line"></span></div>
    </div>
    <div class="tray">
      <svg class="tray-chev" viewBox="0 0 24 24"><path d="M4 17l8-9 8 9"/></svg>
      <svg class="tray-cloud" viewBox="0 0 36 24"><path fill="#9a9a9a" d="M8 14q0-10 9-11 7 0 9 7l-10 7z"/><path fill="#f0f0f0" d="M3 22q-3-2-2-6 2-4 7-3 4-5 9 0 3-1 6 0 5-1 8 2 4 4 1 7z"/></svg>
      <div class="tray-lang"><span>ENG</span><span>IN</span></div>
      <svg class="tray-ic tray-wifi" viewBox="0 0 24 24"><path d="M2 9q10-9 20 0M5.500 13q6.500-6 13 0M9 17q3-3 6 0"/><circle class="solid" cx="12" cy="20" r="1.300"/></svg>
      <svg class="tray-ic tray-vol" viewBox="0 0 24 24"><path d="M3 9h4l6-5v16l-6-5H3zM16 9q2 3 0 6M19 6q4 6 0 12"/></svg>
      <svg class="tray-ic tray-batt" viewBox="0 0 24 24"><rect x="2" y="6" width="18" height="14" rx="3"/><path d="M22 11v4"/><path class="solid" d="M11 1l-5 12h4l-2 9 7-12h-4z"/></svg>
      <div class="tray-clock"><span>18:22</span><span>21-12-2023</span></div>
      <svg class="tray-bell" viewBox="0 0 24 32"><path fill="#f59a7d" d="M12 1q6 0 6 8v8l4 5v2H2v-2l4-5V9q0-8 6-8z"/><path fill="#f59a7d" d="M9 26h6l-3 3z"/></svg>
    </div>
  </footer>
</div>
</body>
</html>
```

FILE: styles.css
```css
* { box-sizing: border-box; }
html, body { margin: 0; padding: 0; }
body { width: 1920px; height: 1080px; overflow: hidden; background: #3b3b3b; font-family: Roboto, "Liberation Sans", sans-serif; }
ul, h1 { margin: 0; padding: 0; }
ul { list-style: none; }
svg { display: block; flex: none; }
.defs { position: absolute; width: 0; height: 0; }
.screen { width: 1920px; height: 1080px; display: flex; flex-direction: column; }

/* icon helpers */
.ic { width: 30px; height: 30px; }
.ic-36 { width: 36px; height: 36px; }
.ic-28 { width: 28px; height: 28px; }
.ic-g { fill: #444746; }
.ic-d { fill: #444746; }
.ic-m { fill: #5f6368; }
.ic-navy { fill: #041e49; }
.env-v { fill: none; stroke: #fff; stroke-width: 1.600; }
.ic-spaces { width: 31px; height: 31px; fill: none; stroke: #444746; stroke-width: 1.700; }
.ic-reply { fill: none; stroke: #444746; stroke-width: 2; }
.i-chrome { width: 24px; height: 24px; fill: none; stroke: #fff; stroke-width: 1.300; stroke-linecap: round; stroke-linejoin: round; }
.i-lg { width: 30px; height: 30px; }
.i-md { width: 26px; height: 26px; }
.i-coll { width: 28px; height: 28px; }
.i-vtabs { width: 27px; height: 27px; }
.i-chrome .solid { fill: #fff; }
.i-chrome .green { fill: #0f7b3a; stroke: #0f7b3a; }

/* title bar */
.titlebar { height: 48px; flex: none; background: #202020; display: flex; align-items: flex-end; padding-left: 17px; color: #fff; font-family: "Open Sans", "Noto Sans", sans-serif; }
.profile-pic { width: 32px; height: 32px; border-radius: 50%; overflow: hidden; align-self: center; margin-bottom: 2px; }
.tb-btn { width: 44px; height: 46px; display: flex; align-items: center; justify-content: center; align-self: center; }
.tb-first { margin-left: 22px; }
.tb-second { margin-left: 19px; }
.tab-sep { width: 1px; height: 30px; background: #5a5a5a; align-self: center; margin: 0 3px 0 13px; }
.tab { width: 351px; height: 48px; display: flex; align-items: center; padding: 0 11px 2px 12px; margin-right: 4px; }
.tab-active { width: 359px; padding: 0 15px 2px 16px; margin-right: 5px; background: #3b3b3b; border-radius: 10px 10px 0 0; }
.favicon { width: 23px; height: 17px; }
.tab-title { flex: 1; min-width: 0; margin: 0 10px 0 16px; font-size: 17.500px; white-space: nowrap; overflow: hidden; color: #f1f1f1;
  -webkit-mask-image: linear-gradient(to right, #000 90%, transparent); mask-image: linear-gradient(to right, #000 90%, transparent); }
.tab-active .tab-title { margin-left: 15px; }
.tab-x { width: 15px; height: 15px; fill: none; stroke: #eee; stroke-width: 1.400; }
.win-btns { margin-left: auto; display: flex; align-self: stretch; }
.win-btn { width: 69px; display: flex; align-items: center; justify-content: center; }
.win-btn svg { width: 16px; height: 16px; fill: none; stroke: #fff; stroke-width: 1; }

/* browser toolbar */
.toolbar { height: 57px; flex: none; background: #3b3b3b; display: flex; align-items: center; font-family: "Open Sans", "Noto Sans", sans-serif; }
.tool-back { margin-left: 26px; width: 30px; }
.tool-reload { margin-left: 37px; width: 30px; margin-right: 27px; }
.address { width: 1228px; height: 45px; border-radius: 23px; background: #2c2c2c; display: flex; align-items: center; padding-left: 26px; }
.i-lock { width: 24px; height: 24px; fill: none; stroke: #e4e4e4; stroke-width: 1.500; }
.i-lock .solid { fill: #e4e4e4; stroke: none; }
.url { font-size: 20.260px; margin-left: 23px; padding-bottom: 2px; white-space: nowrap; flex: 1; min-width: 0; }
.url-dim { color: #a0a0a0; }
.url-host { color: #fff; }
.i-addr { width: 26px; height: 26px; fill: none; stroke: #9a9a9a; stroke-width: 1.300; }
.i-read { margin-right: 31px; }
.i-fav { margin-right: 25px; }
.ext { width: 66.500px; height: 40px; display: flex; align-items: center; justify-content: center; color: #fff; }
.ext-wave { margin-left: 9px; }
.ext-wave svg { width: 24px; height: 28px; }
.ext-puzzle { padding-left: 4px; }
.tool-sep { width: 1px; height: 28px; background: #6a6a6a; margin: 0 2px 0 3px; }
.ext-dots { font-size: 26px; font-weight: 700; line-height: 40px; }
.ext-cop { width: 62px; padding-right: 4px; }
.ext-cop svg { width: 38px; height: 38px; }

/* app */
.app { height: 897px; flex: none; display: flex; padding-left: 6px; background: #3b3b3b; }
.gmail { width: 1848px; background: #f6f8fc; border-radius: 12px; overflow: hidden; display: grid; grid-template-columns: 102px 384px 1278px 84px; grid-template-rows: 96px 801px; }
.rail { grid-column: 1; grid-row: 1 / 3; background: #e9f1fb; display: flex; flex-direction: column; align-items: center; }
.rail-menu { height: 96px; flex: none; display: flex; align-items: center; margin-bottom: 26px; }
.rail-menu .ic { width: 36px; height: 36px; }
.rail-item { height: 96px; flex: none; display: flex; flex-direction: column; align-items: center; }
.rail-pill { position: relative; width: 66px; height: 48px; border-radius: 24px; display: flex; align-items: center; justify-content: center; }
.rail-active .rail-pill { background: #d3e3fd; }
.rail-label { font-size: 18.400px; line-height: 24px; margin-top: 1px; color: #444746; }
.rail-active .rail-label { color: #041e49; font-weight: 500; }
.badge { position: absolute; left: 28px; top: -7px; min-width: 44px; height: 27px; border: 2px solid #e9f1fb; border-radius: 14px; background: #b3261e; color: #fff; font-size: 17px; font-weight: 700; line-height: 23px; text-align: center; }

.brand { grid-column: 2; grid-row: 1; display: flex; align-items: center; padding: 0 0 0 35px; }
.brand-m { width: 45px; height: 34px; }
.brand-name { font-family: "Open Sans", Roboto, sans-serif; font-size: 33px; color: #5f6368; margin-left: 16px; letter-spacing: -.5px; }

.sidenav { grid-column: 2; grid-row: 2; padding: 12px 18px 0; color: #1f1f1f; }
.compose { width: 208px; height: 84px; border: 0; border-radius: 24px; background: #c2e7ff; display: flex; align-items: center; padding: 0 0 0 22px; gap: 20px; font: 500 21.800px Roboto, sans-serif; color: #001d35; }
.compose-text { padding-bottom: 2px; }
.nav-list { margin-top: 24px; }
.nav-row { width: 348px; height: 48px; display: flex; align-items: center; gap: 24px; padding: 0 18px 0 24px; border-radius: 24px; font-size: 21.600px; color: #444746; }
.nav-active { background: #d3e3fd; color: #041e49; font-weight: 700; }
.nav-bold { font-weight: 700; color: #3c3c3c; }
.nav-active .nav-text, .nav-bold .nav-text { font-size: 22.800px; }
.nav-text { flex: 1; padding-bottom: 2px; }
.nav-count { font-size: 18px; font-weight: 700; }
.nav-count-light { font-weight: 400; color: #5e5e5e; }
.labels { margin-top: 33px; height: 48px; width: 348px; padding: 0 12px 0 21px; display: flex; justify-content: space-between; align-items: center; font-size: 25px; color: #3c3c3c; }
.labels-text { padding-bottom: 2px; }

.topbar { grid-column: 3 / 5; grid-row: 1; display: flex; padding-top: 12px; height: 84px; }
.search { width: 709px; height: 72px; border-radius: 36px; background: #eaf1fb; display: flex; align-items: center; padding: 0 23px 0 18px; gap: 12px; }
.search-text { flex: 1; font-size: 24px; color: #444746; }
.status { width: 151px; height: 72px; margin-left: 46px; border-radius: 36px; background: #e9f1fb; display: flex; align-items: center; padding-left: 18px; }
.status-dot { width: 18px; height: 18px; border-radius: 50%; background: #1e8e3e; }
.status-text { margin-left: 11px; font-size: 22px; font-weight: 400; color: #1f1f1f; }
.status-arrow { width: 22px; height: 22px; margin-left: 8px; fill: #444746; }
.top-btns { display: flex; gap: 6px; margin-left: 21px; }
.top-btn { width: 60px; height: 72px; display: flex; align-items: center; justify-content: center; }
.account { width: 200px; height: 72px; margin-left: 19px; background: #fff; border: 1px solid #dadce0; border-radius: 12px; display: flex; align-items: center; padding: 0 8px 0 14px; }
.account-seal { width: 44px; height: 38px; }
.account-vit { margin-left: 3px; width: 61px; display: flex; flex-direction: column; align-items: stretch; text-align: center; font-family: "Liberation Serif", serif; color: #2c2d6f; }
.account-name { font-size: 21px; font-weight: 700; line-height: 19px; border-bottom: 1px solid #7a7a9a; }
.account-name sup { font-size: 6px; font-weight: 400; line-height: 0; }
.account-place { font-size: 8.500px; font-weight: 700; letter-spacing: 2.900px; line-height: 11px; white-space: nowrap; }
.account-web { font-size: 4.500px; line-height: 6px; }
.avatar-r { width: 48px; height: 48px; margin-left: auto; border-radius: 50%; background: #ab47bc; color: #fff; font-size: 27px; line-height: 48px; text-align: center; }

/* mail card */
.card { grid-column: 3; grid-row: 2; margin-bottom: 24px; background: #fff; border-radius: 24px; overflow: hidden; display: flex; flex-direction: column; }
.actions { height: 72px; flex: none; display: flex; align-items: center; padding: 0 35px 0 9px; }
.act { width: 60px; height: 60px; margin-right: 6px; display: flex; align-items: center; justify-content: center; }
.act-back { margin-right: 24px; }
.act-more { margin-left: -6px; }
.act-sep { width: 1px; height: 30px; background: #e0e0e0; margin: 0 15px 0 8px; }
.pager { margin-left: auto; display: flex; align-items: center; }
.pager-text { font-size: 18px; color: #5e5e5e; margin-right: 17px; }
.pager-btn { width: 58px; height: 60px; display: flex; align-items: center; justify-content: center; }

.card-body { flex: 1; min-height: 0; display: flex; }
.thread { flex: 1; min-width: 0; }
.scroll-track { width: 16px; flex: none; }
.scroll-thumb { height: 378px; background: #c8c8c8; }

.subject-row { height: 99px; padding: 3px 20px 0 108px; display: flex; align-items: center; }
.subject { font-size: 32.600px; font-weight: 400; color: #1f1f1f; white-space: nowrap; }
.chip { margin-left: 15px; height: 27px; width: 75px; padding: 0 5px; border-radius: 5px; background: #dddddd; color: #666; font-size: 18px; display: flex; align-items: center; justify-content: space-between; }
.chip-x { width: 12px; height: 12px; fill: none; stroke: #555; stroke-width: 1.400; }
.subject-tools { margin-left: auto; display: flex; gap: 24px; padding-right: 12px; }

.message { display: flex; }
.sender-pic { width: 108px; flex: none; padding: 15px 0 0 24px; }
.sender-pic svg { width: 60px; height: 60px; }
.coe { font: 900 10px "Liberation Sans", sans-serif; letter-spacing: 2px; }
.msg-main { flex: 1; min-width: 0; }
.msg-head { height: 74px; display: flex; justify-content: space-between; padding-right: 19px; }
.who { padding-top: 15px; }
.who-from, .who-to { height: 30px; line-height: 30px; white-space: nowrap; }
.from-name { font-size: 22.800px; font-weight: 700; color: #1f1f1f; }
.from-mail { font-size: 18.300px; color: #5e5e5e; }
.who-to { font-size: 18.400px; color: #5e5e5e; display: flex; align-items: center; gap: 9px; }
.to-arrow { width: 0; height: 0; border-left: 6px solid transparent; border-right: 6px solid transparent; border-top: 7px solid #5e5e5e; margin-top: 2px; }
.msg-meta { height: 60px; display: flex; align-items: center; }
.msg-time { font-size: 18.200px; color: #5e5e5e; margin-right: 16px; white-space: nowrap; }
.star-btn { width: 60px; height: 60px; border-radius: 50%; background: #e3e3e3; border: 1.500px solid #c9c9c9; display: flex; align-items: center; justify-content: center; }
.star-btn svg { width: 30px; height: 30px; }
.meta-btn { width: 59px; height: 60px; display: flex; align-items: center; justify-content: center; }

.msg-body { margin-top: 13px; font-family: "Liberation Sans", Arial, sans-serif; font-size: 19.500px; line-height: 29.250px; color: #222; }
.link { color: #1155cc; }
.sig { color: #555; }
.dashes { white-space: nowrap; overflow: hidden; width: 664px; font-size: 19.500px; line-height: 29px; color: #666; }
.dashes-top { margin-top: 5px; }
.banner { height: 115px; display: flex; align-items: flex-start; padding: 9px 0 0 10px; font-family: "Liberation Serif", serif; }
.banner-seal { width: 68px; height: 71px; }
.banner-vit { width: 112px; margin-left: 11px; display: flex; flex-direction: column; align-items: center; color: #3a2f73; }
.banner-name { font-size: 44px; line-height: 36px; font-weight: 700; height: 44px; padding-top: 5px; width: 112px; text-align: center; border-bottom: 2px solid #2a2255; }
.banner-name sup { font-size: 12px; font-weight: 400; line-height: 0; vertical-align: 30px; }
.banner-place { font-size: 17px; letter-spacing: 7.500px; padding-left: 7px; line-height: 21px; white-space: nowrap; }
.banner-web { font-size: 9.500px; line-height: 12px; }
.banner-list { width: 410px; margin-left: 42px; padding-top: 1px; color: #1f4e8c; font-size: 13px; line-height: 17px; font-weight: 700; list-style: disc; letter-spacing: .48px; }
.banner-list li { margin-bottom: 3px; }
.banner-list li:last-child::marker { color: #000; }
.seal-ring { font: 700 5.500px "Liberation Serif", serif; fill: #4a3f86; }
.seal-v { font: 700 7px "Liberation Serif", serif; fill: #3b3270; }
.seal-u { font: 400 3.500px "Liberation Sans", sans-serif; fill: #3b3270; }

/* add-on strip */
.addons { grid-column: 4; grid-row: 2; display: flex; flex-direction: column; align-items: center; padding-bottom: 18px; }
.addon { height: 84px; flex: none; display: flex; align-items: center; justify-content: center; }
.cal { font: 700 14px Roboto, sans-serif; fill: #1a73e8; }
.addon-sep { width: 30px; height: 1px; background: #dadce0; margin-top: 24px; flex: none; }
.addon-plus { margin-top: 48px; }
.addon-chev { margin-top: auto; height: 48px; display: flex; align-items: center; }
.addon-chev .ic { fill: #1f1f1f; }

/* Edge sidebar */
.edge-side { width: 66px; flex: none; display: flex; flex-direction: column; align-items: center; background: #3b3b3b; }
.side-i { height: 60.400px; flex: none; display: flex; align-items: center; justify-content: center; }
.side-i svg { width: 30px; height: 30px; }
.side-bell { padding-top: 6px; }
.side-sep { width: 42px; height: 2px; background: #6c6c6c; margin-top: 19px; flex: none; }
.side-plus { margin-top: 34px; }
.side-sep-low { margin-top: auto; }
.side-tool { height: 60px; flex: none; display: flex; align-items: center; justify-content: center; }
.side-panel { margin: 4px 0 3px; }
.side-gear { height: 54px; }

.strip { height: 8px; flex: none; background: #3b3b3b; }

/* taskbar */
.taskbar { height: 70px; flex: none; background: #1e1e20; display: flex; align-items: center; color: #fff; font-family: "Open Sans", "Noto Sans", sans-serif; }
.widget { position: relative; width: 36px; height: 44px; margin: 0 0 0 17px; }
.widget svg { width: 36px; height: 42px; margin-top: 4px; }
.tray-badge { position: absolute; width: 24px; height: 24px; border-radius: 50%; color: #222; font-size: 16px; line-height: 24px; text-align: center; }
.badge-pink { left: 14px; top: -5px; background: #ff9aa8; }
.badge-coral { background: #f5846a; }
.badge-teams { right: 8px; top: 6px; }
.badge-wa { right: 8px; top: 8px; }
.apps { margin-left: 403px; display: grid; grid-template-columns: repeat(15, 66.200px); align-items: center; }
.app-i { height: 60px; display: flex; align-items: center; justify-content: center; }
.app-i svg { width: 36px; height: 36px; }
.app-nudge { padding-left: 4px; }
.app-rel { position: relative; }
.help-dot { position: absolute; right: 5px; top: 4px; width: 22px; height: 24px; border-radius: 50%; background: #ffc107; }
.help { font: 700 30px Roboto, sans-serif; fill: #fff; }
.pre { font: 900 9.500px "Liberation Sans", sans-serif; fill: #222; }
.teams { font: 700 13px "Liberation Sans", sans-serif; fill: #5059c9; }
.word { font: 700 15px "Liberation Sans", sans-serif; fill: #fff; }
.mysql { font: 400 9.500px "Liberation Mono", monospace; fill: #ddd; }
.app-on { position: relative; width: 59px; justify-self: center; background: #2d2d30; border-radius: 8px; }
.app-line { position: absolute; left: 18px; bottom: 2px; width: 23px; height: 5px; border-radius: 3px; background: #f0806c; }
.tray { flex: 1; display: flex; align-items: center; height: 70px; }
.tray-chev { width: 22px; height: 22px; margin-left: 30px; fill: none; stroke: #fff; stroke-width: 1.800; }
.tray-cloud { width: 26px; height: 18px; margin-left: 26px; }
.tray-lang { width: 60px; margin-left: 13px; display: flex; flex-direction: column; align-items: center; font-size: 17.500px; line-height: 23px; }
.tray-ic { width: 24px; height: 24px; fill: none; stroke: #eee; stroke-width: 1.400; }
.tray-ic .solid { fill: #eee; stroke: none; }
.tray-wifi { margin-left: 14px; }
.tray-vol { margin-left: 10px; }
.tray-batt { margin-left: 13px; }
.tray-clock { width: 112px; margin-left: 8px; display: flex; flex-direction: column; align-items: flex-end; font-size: 18px; line-height: 23px; white-space: nowrap; }
.tray-bell { width: 20px; height: 26px; margin-left: 11px; }
```
